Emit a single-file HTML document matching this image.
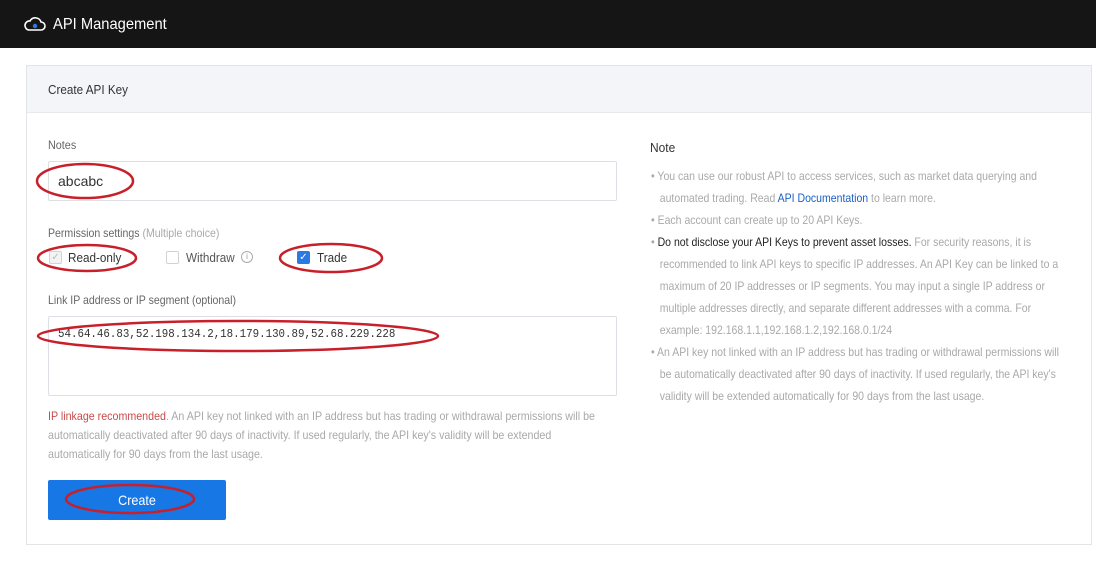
<!DOCTYPE html>
<html><head><meta charset="utf-8"><style>
*{margin:0;padding:0;box-sizing:border-box}
body{width:1096px;height:561px;background:#fff;font-family:"Liberation Sans",Arial,sans-serif;position:relative;overflow:hidden;color:#333}
.a{position:absolute;white-space:nowrap}
.sx{transform-origin:0 50%}
.g{color:#a9a9a9}
</style></head><body>
<div class="a" style="left:0;top:0;width:1096px;height:48px;background:#151515"></div>
<svg class="a" style="left:24px;top:15px" width="22" height="18" viewBox="0 0 22 18"><path d="M5 15 H17 A4 4 0 0 0 17 7 A6 6 0 0 0 6 6 A4.5 4.5 0 0 0 5 15 Z" fill="none" stroke="#fff" stroke-width="1.6"/><circle cx="11" cy="11" r="2.2" fill="#2a7ae2"/></svg>
<div class="a sx" style="left:53px;top:16px;font-size:16px;color:#fff;transform:scaleX(0.92)">API Management</div>

<div class="a" style="left:26px;top:65px;width:1066px;height:480px;border:1px solid #e2e4e8"></div>
<div class="a" style="left:27px;top:66px;width:1064px;height:47px;background:#f3f5f9;border-bottom:1px solid #e6e8ec"></div>
<div class="a sx" style="left:48px;top:82px;font-size:13px;color:#333;transform:scaleX(0.9)">Create API Key</div>

<div class="a sx" style="left:48px;top:138px;font-size:12px;color:#666;transform:scaleX(0.9)">Notes</div>
<div class="a" style="left:48px;top:161px;width:569px;height:40px;border:1px solid #dcdfe4;border-radius:2px"></div>
<div class="a" style="left:58px;top:173px;font-size:14px;color:#333">abcabc</div>

<div class="a sx" style="left:48px;top:226px;font-size:12px;color:#666;transform:scaleX(0.88)">Permission settings <span class="g">(Multiple choice)</span></div>
<div class="a" style="left:49px;top:251px;width:13px;height:13px;border:1px solid #d0d3d8;background:#f2f3f5;border-radius:2px;color:#bbb;font-size:10px;line-height:11px;text-align:center">✓</div>
<div class="a sx" style="left:68px;top:250px;font-size:13px;color:#333;transform:scaleX(0.9)">Read-only</div>
<div class="a" style="left:166px;top:251px;width:13px;height:13px;border:1px solid #cfd2d6;border-radius:2px"></div>
<div class="a sx" style="left:186px;top:250px;font-size:13px;color:#555;transform:scaleX(0.9)">Withdraw</div>
<div class="a" style="left:241px;top:251px;width:12px;height:12px;border:1px solid #aaa;border-radius:50%;font-size:8px;line-height:10px;text-align:center;color:#999">i</div>
<div class="a" style="left:297px;top:251px;width:13px;height:13px;background:#2b7ae2;border-radius:2px;color:#fff;font-size:10px;line-height:13px;text-align:center">✓</div>
<div class="a sx" style="left:317px;top:250px;font-size:13px;color:#333;transform:scaleX(0.9)">Trade</div>

<div class="a sx" style="left:48px;top:293px;font-size:12px;color:#666;transform:scaleX(0.88)">Link IP address or IP segment (optional)</div>
<div class="a" style="left:48px;top:316px;width:569px;height:80px;border:1px solid #dcdfe4;border-radius:2px"></div>
<div class="a" style="left:58px;top:328px;font-family:'Liberation Mono',monospace;font-size:11.5px;color:#333;transform:scaleX(0.94);transform-origin:0 50%">54.64.46.83,52.198.134.2,18.179.130.89,52.68.229.228</div>

<div class="a sx g" style="left:48px;top:407px;font-size:12px;line-height:19px;transform:scaleX(0.89)"><span style="color:#c94a4a">IP linkage recommended</span>. An API key not linked with an IP address but has trading or withdrawal permissions will be<br>automatically deactivated after 90 days of inactivity. If used regularly, the API key's validity will be extended<br>automatically for 90 days from the last usage.</div>

<div class="a" style="left:48px;top:480px;width:178px;height:40px;background:#1677e5;border-radius:2px;color:#fff;font-size:14px;text-align:center;line-height:40px"><span style="display:inline-block;transform:scaleX(0.9)">Create</span></div>

<div class="a sx" style="left:650px;top:140px;font-size:13px;color:#333;transform:scaleX(0.92)">Note</div>
<div class="a sx g" style="left:651px;top:165px;font-size:12px;line-height:22px;transform:scaleX(0.875)">
• You can use our robust API to access services, such as market data querying and<br>
&nbsp;&nbsp;&nbsp;automated trading. Read <span style="color:#1a5fc9">API Documentation</span> to learn more.<br>
• Each account can create up to 20 API Keys.<br>
• <span style="color:#222">Do not disclose your API Keys to prevent asset losses.</span> For security reasons, it is<br>
&nbsp;&nbsp;&nbsp;recommended to link API keys to specific IP addresses. An API Key can be linked to a<br>
&nbsp;&nbsp;&nbsp;maximum of 20 IP addresses or IP segments. You may input a single IP address or<br>
&nbsp;&nbsp;&nbsp;multiple addresses directly, and separate different addresses with a comma. For<br>
&nbsp;&nbsp;&nbsp;example: 192.168.1.1,192.168.1.2,192.168.0.1/24<br>
• An API key not linked with an IP address but has trading or withdrawal permissions will<br>
&nbsp;&nbsp;&nbsp;be automatically deactivated after 90 days of inactivity. If used regularly, the API key's<br>
&nbsp;&nbsp;&nbsp;validity will be extended automatically for 90 days from the last usage.</div>

<svg class="a" style="left:0;top:0" width="1096" height="561" fill="none" stroke="#c8202a" stroke-width="2.5">
<ellipse cx="85" cy="181" rx="48" ry="17"/>
<ellipse cx="87" cy="258" rx="49" ry="13"/>
<ellipse cx="331" cy="258" rx="51" ry="14"/>
<ellipse cx="238" cy="336" rx="200" ry="15"/>
<ellipse cx="130" cy="499" rx="64" ry="14"/>
</svg>
</body></html>
